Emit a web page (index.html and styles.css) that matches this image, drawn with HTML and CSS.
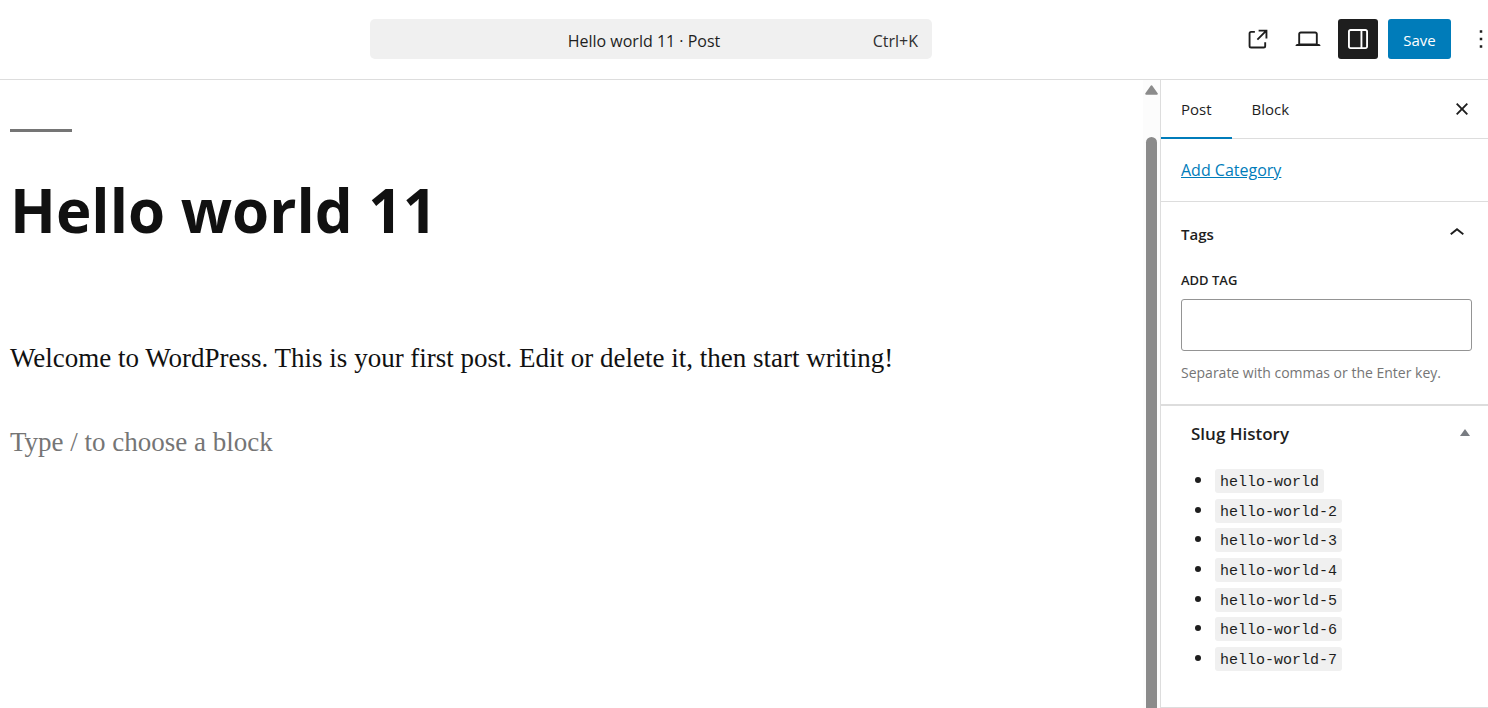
FILE: index.html
```html
<!DOCTYPE html>
<html lang="en">
<head>
<meta charset="utf-8">
<title>Hello world 11 · Post</title>
<link rel="stylesheet" href="styles.css">
</head>
<body>
<div class="editor">
  <header class="header">
    <div class="header-center">
      <button class="command-bar" type="button">
        <span class="command-title">Hello world 11 · Post</span>
        <span class="command-shortcut">Ctrl+K</span>
      </button>
    </div>
    <div class="header-settings">
      <a class="icon-button" href="#" aria-label="View post"><svg class="icon" viewBox="0 0 24 24"><path d="M19.5 4.5h-7V6h4.44l-5.97 5.97 1.06 1.06L18 7.06v4.44h1.5v-7Zm-13 1a2 2 0 0 0-2 2v10a2 2 0 0 0 2 2h10a2 2 0 0 0 2-2v-3H17v3a.5.5 0 0 1-.5.5h-10a.5.5 0 0 1-.5-.5v-10a.5.5 0 0 1 .5-.5h3V5.5h-3Z"/></svg></a>
      <button class="icon-button" type="button" aria-label="Preview"><svg class="icon" viewBox="0 0 24 24"><path d="M20.5 16h-.7V8c0-1.1-.9-2-2-2H6.2c-1.1 0-2 .9-2 2v8h-.7c-.8 0-1.5.7-1.5 1.5h20c0-.8-.7-1.5-1.5-1.5zM5.7 8c0-.3.2-.5.5-.5h11.6c.3 0 .5.2.5.5v7.6H5.7V8z"/></svg></button>
      <button class="icon-button is-pressed" type="button" aria-label="Settings" aria-pressed="true"><svg class="icon" viewBox="0 0 24 24"><path d="M18 4H6c-1.1 0-2 .9-2 2v12c0 1.1.9 2 2 2h12c1.1 0 2-.9 2-2V6c0-1.1-.9-2-2-2zm-4 14.5H6c-.3 0-.5-.2-.5-.5V6c0-.3.2-.5.5-.5h8v13zm4.5-.5c0 .3-.2.5-.5.5h-2.5v-13H18c.3 0 .5.2.5.5v12z"/></svg></button>
      <button class="save-button" type="button">Save</button>
      <button class="icon-button" type="button" aria-label="Options"><svg class="icon" viewBox="0 0 24 24"><path d="M13 19h-2v-2h2v2zm0-6h-2v-2h2v2zm0-6h-2V5h2v2z"/></svg></button>
    </div>
  </header>
  <div class="body">
    <main class="canvas">
      <hr class="separator">
      <h1 class="post-title">Hello world 11</h1>
      <p class="paragraph">Welcome to WordPress. This is your first post. Edit or delete it, then start writing!</p>
      <p class="paragraph placeholder">Type / to choose a block</p>
    </main>
    <div class="scrollbar" aria-hidden="true">
      <svg class="scroll-arrow" viewBox="0 0 13 10"><path d="M6.5 1.2 11.8 8.8H1.2z" fill="#8b8b8b" stroke="#8b8b8b" stroke-width="2" stroke-linejoin="round"/></svg>
      <div class="scroll-thumb"></div>
    </div>
    <aside class="sidebar">
      <div class="tabs">
        <button class="tab is-active" type="button">Post</button>
        <button class="tab" type="button">Block</button>
        <button class="close-button" type="button" aria-label="Close settings"><svg class="icon" viewBox="0 0 24 24"><path d="M12 13.06l3.712 3.713 1.061-1.06L13.061 12l3.712-3.712-1.06-1.06L12 10.938 8.288 7.227l-1.061 1.06L10.939 12l-3.712 3.712 1.06 1.061L12 13.061z"/></svg></button>
      </div>
      <section class="category-panel"><a class="link" href="#">Add Category</a></section>
      <section class="tags-panel">
        <button class="panel-toggle" type="button" aria-expanded="true"><span>Tags</span><svg class="icon chevron" viewBox="0 0 24 24"><path d="M6.5 12.4L12 8l5.5 4.4-.9 1.2L12 10l-4.5 3.6-1-1.2z"/></svg></button>
        <label class="field-label" for="add-tag">Add Tag</label>
        <input class="tag-input" id="add-tag" type="text" aria-describedby="tag-help">
        <p class="help" id="tag-help">Separate with commas or the Enter key.</p>
      </section>
      <section class="slug-panel">
        <button class="slug-toggle" type="button" aria-expanded="true"><span>Slug History</span><svg class="triangle" viewBox="0 0 10 7"><path d="M5 0l5 7H0z"/></svg></button>
        <ul class="slug-list">
          <li><code>hello-world</code></li>
          <li><code>hello-world-2</code></li>
          <li><code>hello-world-3</code></li>
          <li><code>hello-world-4</code></li>
          <li><code>hello-world-5</code></li>
          <li><code>hello-world-6</code></li>
          <li><code>hello-world-7</code></li>
        </ul>
      </section>
    </aside>
  </div>
</div>
</body>
</html>
```
FILE: styles.css
```css
* { box-sizing: border-box; }

body {
  margin: 0;
  background: #fff;
  color: #1e1e1e;
  font-family: "Segoe UI", "Open Sans", sans-serif;
  font-size: 15px;
  line-height: 20px;
}

button {
  margin: 0;
  padding: 0;
  border: 0;
  background: none;
  color: inherit;
  font: inherit;
}

.editor {
  display: flex;
  flex-direction: column;
  height: 100vh;
  overflow: hidden;
}

.header {
  display: flex;
  flex: none;
  align-items: center;
  height: 80px;
  padding: 0 0 1px 64px;
  border-bottom: 1px solid #ddd;
  overflow: hidden;
}

.header-center {
  display: flex;
  flex: 1;
  justify-content: center;
  min-width: 0;
}

.command-bar {
  display: grid;
  grid-template-columns: 1fr auto 1fr;
  align-items: center;
  width: 562px;
  height: 40px;
  padding: 4px 14px 0 0;
  border-radius: 5px;
  background: #f0f0f0;
  font-size: 16px;
}

.command-title { grid-column: 2; }

.command-shortcut {
  justify-self: end;
  color: #2f2f2f;
}

.header-settings {
  display: flex;
  flex: none;
  gap: 10px;
  margin-right: -13px;
}

.icon-button {
  display: flex;
  align-items: center;
  justify-content: center;
  width: 40px;
  height: 40px;
  border-radius: 3px;
  color: #1e1e1e;
}

.icon-button.is-pressed {
  background: #1e1e1e;
  color: #fff;
}

.icon {
  display: block;
  flex: none;
  width: 30px;
  height: 30px;
  fill: currentColor;
}

.save-button {
  width: 63px;
  height: 40px;
  padding-top: 2px;
  border-radius: 3px;
  background: #007cba;
  color: #fff;
}

.body {
  display: flex;
  flex: 1;
  min-height: 0;
}

.canvas {
  flex: 1;
  min-width: 0;
  padding: 49px 10px 0;
  color: #111;
  overflow: hidden;
}

.separator {
  width: 62px;
  height: 3px;
  margin: 0;
  border: 0;
  background: #757575;
}

.post-title {
  margin: 36px 0 0;
  font-size: 60px;
  font-weight: 700;
  line-height: 84px;
}

.paragraph {
  margin: 85px 0 0;
  font-family: Garamond, "Liberation Serif", serif;
  font-size: 27px;
  line-height: 42px;
}

.paragraph.placeholder {
  margin-top: 42px;
  color: #757575;
}

.scrollbar {
  display: flex;
  flex: none;
  flex-direction: column;
  align-items: center;
  gap: 42px;
  width: 17px;
  padding-top: 5px;
  background: #fcfcfc;
}

.scroll-arrow {
  flex: none;
  width: 13px;
  height: 10px;
}

.scroll-thumb {
  flex: 1;
  width: 11px;
  border-radius: 6px 6px 0 0;
  background: #8b8b8b;
}

.sidebar {
  flex: none;
  width: 328px;
  border-left: 1px solid #ddd;
  overflow: hidden;
}

.tabs {
  display: flex;
  height: 59px;
  padding-right: 6px;
  border-bottom: 1px solid #ddd;
}

.tab {
  height: 59px;
  padding: 0 20px 2px;
}

.tab.is-active { box-shadow: inset 0 -2px #007cba; }

.close-button {
  display: flex;
  align-items: center;
  justify-content: center;
  width: 40px;
  margin-left: auto;
}

.category-panel {
  padding: 21px 20px;
  border-bottom: 1px solid #ddd;
  font-size: 16px;
}

.link { color: #007cba; }

.tags-panel {
  padding: 0 16px 21px 20px;
  border-bottom: 2px solid #ddd;
}

.panel-toggle {
  display: flex;
  align-items: center;
  justify-content: space-between;
  width: 100%;
  height: 64px;
  font-weight: 600;
  text-align: left;
}

.chevron { margin-bottom: 2px; }

.field-label {
  display: block;
  margin: 4px 0 9px;
  font-size: 13px;
  font-weight: 600;
  text-transform: uppercase;
}

.tag-input {
  display: block;
  width: 100%;
  height: 52px;
  padding: 4px 10px;
  border: 1px solid #949494;
  border-radius: 3px;
  font: inherit;
}

.help {
  margin: 12px 0 0;
  color: #757575;
  font-size: 14px;
}

.slug-panel {
  padding-bottom: 33px;
  border-bottom: 1px solid #ddd;
}

.slug-toggle {
  display: flex;
  align-items: center;
  justify-content: space-between;
  width: 100%;
  height: 56px;
  padding: 0 18px 0 30px;
  font-size: 17px;
  font-weight: 600;
}

.triangle {
  width: 10px;
  height: 7px;
  margin-bottom: 4px;
  fill: #787c82;
}

.slug-list {
  display: grid;
  grid-template-rows: repeat(7, 1fr);
  height: 208px;
  margin: 4px 0 0;
  padding: 0 0 0 34px;
  list-style: none;
}

.slug-list li {
  display: flex;
  align-items: center;
  gap: 14px;
}

.slug-list li::before {
  content: "";
  width: 6px;
  height: 6px;
  margin-bottom: 2px;
  border-radius: 50%;
  background: #1e1e1e;
}

.slug-list code {
  height: 24px;
  padding: 2px 5px 0;
  border-radius: 3px;
  background: #f0f0f0;
  font-family: Consolas, "Liberation Mono", monospace;
  font-size: 15px;
  line-height: 24px;
}
```
